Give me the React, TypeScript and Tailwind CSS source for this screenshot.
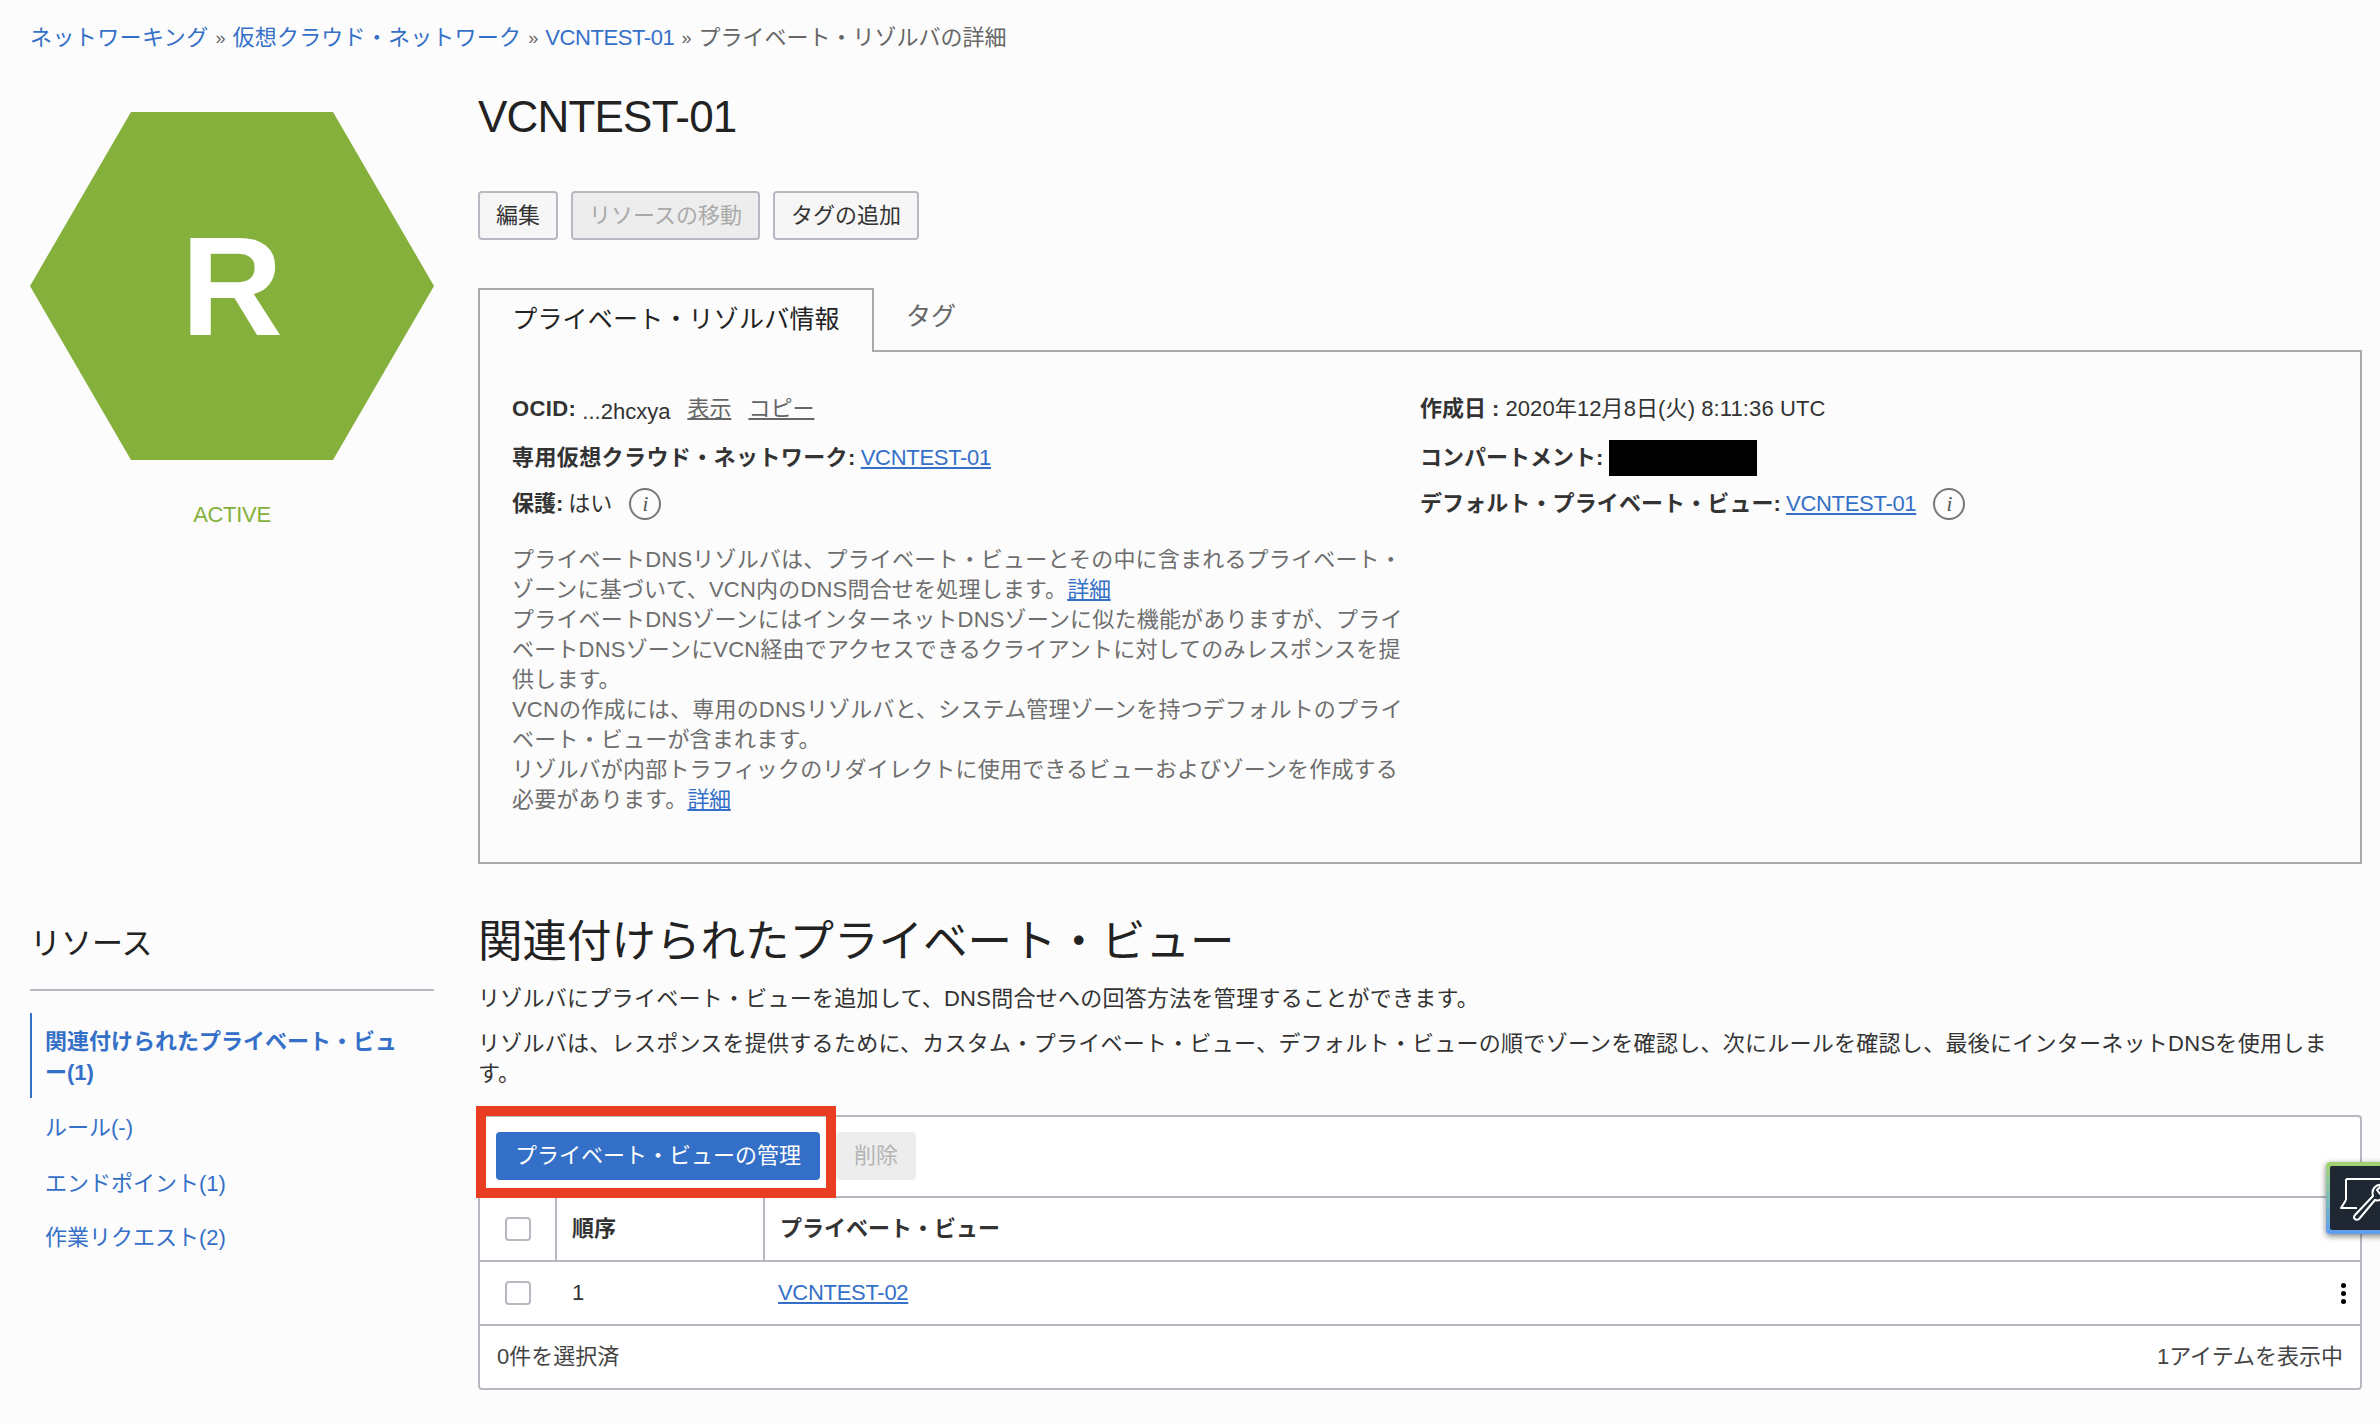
import React from "react";

const link = "text-[#3570c8] tracking-[-0.3px] underline underline-offset-2";

const InfoIcon = () => (
  <span className="inline-flex h-[32px] w-[32px] items-center justify-center rounded-full border-2 border-[#777] font-['Liberation_Serif',serif] text-[21px] text-[#555] italic">
    i
  </span>
);

const Checkbox = () => (
  <div className="h-[24px] w-[26px] rounded-[4px] border-2 border-[#b6bac0] bg-white" />
);

const ToolButton = ({ label, disabled }: { label: string; disabled?: boolean }) => (
  <div
    className={
      disabled
        ? "flex h-[49px] items-center rounded-[4px] border-2 border-[#b6bac0] bg-[#ededed] px-[16px] text-[#aaaaaa]"
        : "flex h-[49px] items-center rounded-[4px] border-2 border-[#b6bac0] bg-[#f6f6f6] px-[16px] text-[#333]"
    }
  >
    {label}
  </div>
);

const ResourceNav = () => (
  <div className="w-[404px] shrink-0">
    <h3 className="mt-[60px] text-[31px] leading-[40px] text-[#222]">リソース</h3>
    <div className="mt-[25px] h-[2px] bg-[#b6bac0]" />
    <div className="mt-[22px] h-[85px] border-l-2 border-[#3570c8] pt-[13px] pl-[13px] text-[22px] leading-[31px] font-bold text-[#3570c8]">
      関連付けられたプライベート・ビュ
      <br />
      ー(1)
    </div>
    <div className="mt-[2px] flex flex-col pl-[15px] text-[#3570c8]">
      <div className="flex h-[55px] items-center">ルール(-)</div>
      <div className="flex h-[55px] items-center pt-[2px]">エンドポイント(1)</div>
      <div className="flex h-[55px] items-center">作業リクエスト(2)</div>
    </div>
  </div>
);

const ViewsTable = () => (
  <div className="relative mt-[26px] h-[275px] rounded-[4px] border-2 border-[#b6bac0] bg-white">
    <div className="flex h-[81px] items-start gap-[16px] border-b-2 border-[#b6bac0] pt-[15px] pl-[16px]">
      <div className="flex h-[48px] items-center rounded-[4px] bg-[#3570c8] px-[19px] text-white">
        プライベート・ビューの管理
      </div>
      <div className="flex h-[48px] items-center rounded-[4px] bg-[#ededed] px-[18px] text-[#b5b5b5]">
        削除
      </div>
    </div>
    <div className="grid h-[64px] grid-cols-[75px_208px_1fr] items-stretch border-b-2 border-[#b6bac0] font-bold text-[#333]">
      <div className="flex items-center justify-center">
        <Checkbox />
      </div>
      <div className="flex items-center border-l-2 border-[#b6bac0] pl-[15px]">順序</div>
      <div className="flex items-center border-l-2 border-[#b6bac0] pl-[15px]">
        プライベート・ビュー
      </div>
    </div>
    <div className="grid h-[64px] grid-cols-[75px_208px_1fr] items-stretch border-b-2 border-[#b6bac0] text-[#333]">
      <div className="flex items-center justify-center">
        <Checkbox />
      </div>
      <div className="flex items-center pl-[17px]">1</div>
      <div className="flex items-center justify-between pr-[14px] pl-[15px]">
        <a className={link}>VCNTEST-02</a>
        <div className="flex flex-col gap-[3px]">
          <span className="h-[5px] w-[5px] rounded-full bg-black" />
          <span className="h-[5px] w-[5px] rounded-full bg-black" />
          <span className="h-[5px] w-[5px] rounded-full bg-black" />
        </div>
      </div>
    </div>
    <div className="flex h-[62px] items-center justify-between px-[17px] text-[#444]">
      <span>0件を選択済</span>
      <span>1アイテムを表示中</span>
    </div>
    <div className="absolute top-[-11px] left-[-4px] h-[92px] w-[360px] border-[10px] border-[#e83f23]" />
  </div>
);

export default function App() {
  return (
    <div className="relative h-[1424px] w-[2380px] overflow-hidden bg-[#fcfcfc] font-['Liberation_Sans','Noto_Sans_CJK_JP',sans-serif] text-[22px] leading-[30px] text-[#333]">
      <div className="flex h-[75px] items-center gap-[7px] pl-[30px] text-[#666]">
        <a className="tracking-[0.4px] text-[#3570c8]">ネットワーキング</a>
        <span className="text-[18px]">»</span>
        <a className="tracking-[0.2px] text-[#3570c8]">仮想クラウド・ネットワーク</a>
        <span className="text-[18px]">»</span>
        <a className="tracking-[-0.4px] text-[#3570c8]">VCNTEST-01</a>
        <span className="text-[18px]">»</span>
        <span>プライベート・リゾルバの詳細</span>
      </div>

      <div className="flex h-[789px] gap-[44px] pl-[30px]">
        <div className="w-[404px] shrink-0">
          <div className="mt-[37px] flex h-[348px] w-[404px] items-center justify-center bg-[#85b03b] text-[141px] leading-none font-bold text-white [clip-path:polygon(25%_0,75%_0,100%_50%,75%_100%,25%_100%,0_50%)]">
            R
          </div>
          <div className="mt-[40px] text-center tracking-[-0.3px] text-[#85b03b]">ACTIVE</div>
        </div>

        <div className="w-[1884px]">
          <h1 className="pt-[12px] text-[44px] leading-[60px] tracking-[-0.8px] text-[#222]">VCNTEST-01</h1>
          <div className="mt-[44px] flex gap-[13px]">
            <ToolButton label="編集" />
            <ToolButton label="リソースの移動" disabled />
            <ToolButton label="タグの追加" />
          </div>

          <div className="mt-[48px] flex h-[64px] text-[25px]">
            <div className="flex h-[64px] w-[396px] items-center justify-center border-x-2 border-t-2 border-[#aaaaaa] bg-[#fcfcfc] pb-[4px] tracking-[0.2px] text-[#222]">
              プライベート・リゾルバ情報
            </div>
            <div className="flex-1 border-b-2 border-[#aaaaaa] pt-[13px] pl-[32px] text-[#666]">タグ</div>
          </div>

          <div className="h-[512px] border-x-2 border-b-2 border-[#aaaaaa] pt-[42px] pl-[32px]">
            <div className="grid grid-cols-[908px_1fr]">
              <div>
                <div className="flex h-[30px] items-center">
                  <b className="tracking-[0.4px]">OCID:</b>
                  <span className="ml-[6px] pt-[5px]">...2hcxya</span>
                  <a className="ml-[17px] text-[#666] underline underline-offset-2">表示</a>
                  <a className="ml-[17px] text-[#666] underline underline-offset-2">コピー</a>
                </div>
                <div className="mt-[19px] flex h-[30px] items-center">
                  <b className="tracking-[0.4px]">専用仮想クラウド・ネットワーク:</b>
                  <a className={`ml-[5px] ${link}`}>VCNTEST-01</a>
                </div>
                <div className="mt-[16px] flex h-[30px] items-center">
                  <b>保護:</b>
                  <span className="ml-[5px]">はい</span>
                  <span className="ml-[17px] flex">
                    <InfoIcon />
                  </span>
                </div>
                <p className="mt-[26px] w-[898px] tracking-[0.2px] text-[#6e6e6e]">
                  プライベートDNSリゾルバは、プライベート・ビューとその中に含まれるプライベート・ゾーンに基づいて、VCN内のDNS問合せを処理します。<a className={link}>詳細</a>
                  <br />
                  プライベートDNSゾーンにはインターネットDNSゾーンに似た機能がありますが、プライベートDNSゾーンにVCN経由でアクセスできるクライアントに対してのみレスポンスを提供します。
                  <br />
                  VCNの作成には、専用のDNSリゾルバと、システム管理ゾーンを持つデフォルトのプライベート・ビューが含まれます。
                  <br />
                  リゾルバが内部トラフィックのリダイレクトに使用できるビューおよびゾーンを作成する必要があります。<a className={link}>詳細</a>
                </p>
              </div>
              <div>
                <div className="flex h-[30px] items-center">
                  <b>作成日 :</b>
                  <span className="ml-[6px] tracking-[0.1px]">2020年12月8日(火) 8:11:36 UTC</span>
                </div>
                <div className="mt-[19px] flex h-[30px] items-center">
                  <b>コンパートメント:</b>
                  <span className="ml-[6px] h-[36px] w-[148px] bg-black" />
                </div>
                <div className="mt-[16px] flex h-[30px] items-center">
                  <b className="tracking-[0.1px]">デフォルト・プライベート・ビュー:</b>
                  <a className={`ml-[5px] ${link}`}>VCNTEST-01</a>
                  <span className="ml-[17px] flex">
                    <InfoIcon />
                  </span>
                </div>
              </div>
            </div>
          </div>
        </div>
      </div>

      <div className="flex gap-[44px] pl-[30px]">
        <ResourceNav />
        <div className="w-[1884px]">
          <h2 className="mt-[48px] text-[44.5px] leading-[60px] text-[#222]">
            関連付けられたプライベート・ビュー
          </h2>
          <p className="mt-[12px] tracking-[0.27px]">
            リゾルバにプライベート・ビューを追加して、DNS問合せへの回答方法を管理することができます。
          </p>
          <p className="mt-[15px] tracking-[0.27px]">
            リゾルバは、レスポンスを提供するために、カスタム・プライベート・ビュー、デフォルト・ビューの順でゾーンを確認し、次にルールを確認し、最後にインターネットDNSを使用しま
            <br />
            す。
          </p>
          <ViewsTable />
        </div>
      </div>

      <div className="absolute top-[1162px] left-[2326px] h-[72px] w-[70px] rounded-[4px] bg-gradient-to-b from-[#a4d36c] to-[#5f9bf0] p-[4px] shadow-[0_2px_6px_rgba(0,0,0,0.5)]">
        <div className="h-full w-full rounded-[2px] bg-[#1f2733] pt-[10px] pl-[9px]">
          <svg width="50" height="46" viewBox="0 0 50 46" fill="none" stroke="white" strokeWidth="2" strokeLinejoin="round">
            <path d="M7 3H42V14" />
            <path d="M7 3L7 24" />
            <path d="M7 24L2 32H18" />
            <path d="M16 39L34 20C32 13 37 8 43 9L38 14L41 18L46 14C47 21 41 26 36 24L20 43C17 45 13 42 16 39Z" fill="#1f2733" />
          </svg>
        </div>
      </div>
    </div>
  );
}
